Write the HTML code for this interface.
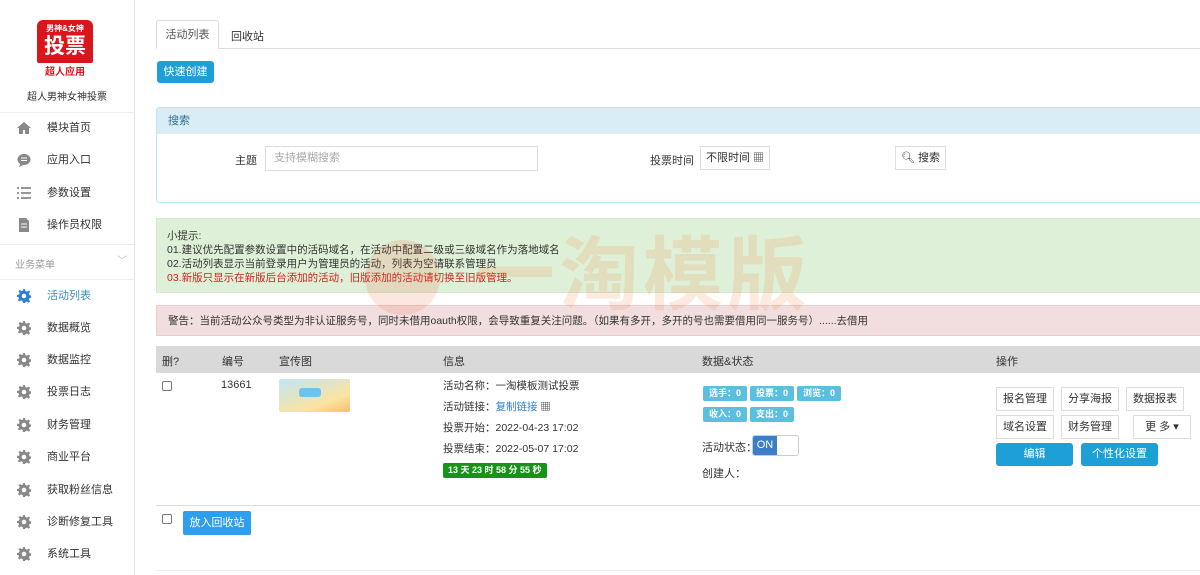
<!DOCTYPE html>
<html><head><meta charset="utf-8"><style>
*{margin:0;padding:0;box-sizing:border-box}
body{width:1200px;height:575px;overflow:hidden;background:#fff;font-family:"Liberation Sans","Noto Sans CJK SC",sans-serif;font-size:11px;color:#333;position:relative}
.a{position:absolute}
.side{left:0;top:0;width:135px;height:575px;border-right:1px solid #e5e5e5}
.nav{left:0;width:134px;height:32px;line-height:32px;padding-left:47px;font-size:11px;color:#333}
.ic{position:absolute;left:17px;top:9px;width:14px;height:14px}
.btn{position:absolute;border:1px solid #ddd;background:#fff;text-align:center;color:#333;font-size:11px}
.lbl{display:inline-block;background:#5bc0de;color:#fff;font-weight:bold;font-size:9px;height:15px;line-height:15px;padding:0 6px;margin-right:3px;border-radius:2px}
</style></head><body>
<svg width="0" height="0" style="position:absolute"><defs><symbol id="g" viewBox="0 0 14 14"><path d="M6 0h2l.4 2 1.6.7 1.7-1.2 1.4 1.4-1.2 1.7.7 1.6 2 .4v2l-2 .4-.7 1.6 1.2 1.7-1.4 1.4-1.7-1.2-1.6.7L8 14H6l-.4-2-1.6-.7-1.7 1.2-1.4-1.4 1.2-1.7L1.4 8 0 8V6l2-.4.7-1.6-1.2-1.7 1.4-1.4 1.7 1.2 1.6-.7z"/><circle cx="7" cy="7" r="2.3" fill="#fff"/></symbol></defs></svg>
<div class="a side"></div>
<div class="a" style="left:37px;top:20px;width:56px;height:43px;background:#d9161c;border-radius:6px 6px 2px 2px;color:#fff;text-align:center">
<div style="font-size:8px;line-height:10px;margin-top:4px;font-weight:bold">男神&amp;女神</div>
<div style="font-size:21px;font-weight:bold;line-height:25px">投票</div></div>
<div class="a" style="left:37px;top:63px;width:56px;text-align:center;color:#d9161c;font-weight:bold;font-size:10px">超人应用</div>
<div class="a" style="left:0;top:88px;width:134px;text-align:center;font-size:10px">超人男神女神投票</div>
<div class="a" style="left:0;top:112px;width:134px;border-top:1px solid #eee"></div>
<div class="a nav" style="top:112px"><svg class="ic" viewBox="0 0 14 14"><path d="M7 1L0 7h2v6h4V9h2v4h4V7h2z" fill="#888"/></svg>模块首页</div>
<div class="a nav" style="top:144px"><svg class="ic" viewBox="0 0 14 14"><ellipse cx="7" cy="6.5" rx="6.5" ry="5.5" fill="#888"/><path d="M3 11l-1 3 4-2z" fill="#888"/><path d="M4 5h6M4 7.5h6" stroke="#fff"/></svg>应用入口</div>
<div class="a nav" style="top:177px"><svg class="ic" viewBox="0 0 14 14"><path d="M0 2h2M4 2h10M0 7h2M4 7h10M0 12h2M4 12h10" stroke="#777" stroke-width="1.6"/></svg>参数设置</div>
<div class="a nav" style="top:209px"><svg class="ic" viewBox="0 0 14 14"><path d="M2 0h7l3 3v11H2z" fill="#888"/><path d="M4 6h6M4 9h6" stroke="#fff"/></svg>操作员权限</div>
<div class="a" style="left:0;top:244px;width:134px;border-top:1px solid #eee"></div>
<div class="a" style="left:15px;top:256px;color:#999;font-size:10px">业务菜单</div>
<div class="a" style="left:117px;top:252px;color:#bbb;font-size:10px">﹀</div>
<div class="a" style="left:0;top:279px;width:134px;border-top:1px solid #eee"></div>
<div class="a nav" style="top:280px;color:#3c8dbc"><svg class="ic" style="fill:#2a7fd4"><use href="#g"/></svg>活动列表</div>
<div class="a nav" style="top:312px"><svg class="ic" style="fill:#888"><use href="#g"/></svg>数据概览</div>
<div class="a nav" style="top:344px"><svg class="ic" style="fill:#888"><use href="#g"/></svg>数据监控</div>
<div class="a nav" style="top:376px"><svg class="ic" style="fill:#888"><use href="#g"/></svg>投票日志</div>
<div class="a nav" style="top:409px"><svg class="ic" style="fill:#888"><use href="#g"/></svg>财务管理</div>
<div class="a nav" style="top:441px"><svg class="ic" style="fill:#888"><use href="#g"/></svg>商业平台</div>
<div class="a nav" style="top:474px"><svg class="ic" style="fill:#888"><use href="#g"/></svg>获取粉丝信息</div>
<div class="a nav" style="top:506px"><svg class="ic" style="fill:#888"><use href="#g"/></svg>诊断修复工具</div>
<div class="a nav" style="top:538px"><svg class="ic" style="fill:#888"><use href="#g"/></svg>系统工具</div>

<div class="a" style="left:156px;top:48px;width:1044px;border-top:1px solid #ddd"></div>
<div class="a" style="left:156px;top:20px;width:63px;height:29px;border:1px solid #ddd;border-bottom:none;background:#fff;border-radius:3px 3px 0 0;text-align:center;line-height:28px;color:#555">活动列表</div>
<div class="a" style="left:231px;top:28px;color:#333">回收站</div>
<div class="a" style="left:157px;top:61px;width:57px;height:22px;background:#1e9fd6;color:#fff;border-radius:3px;text-align:center;line-height:22px">快速创建</div>

<div class="a" style="left:156px;top:107px;width:1050px;height:96px;border:1px solid #bce8f1;border-radius:3px"></div>
<div class="a" style="left:157px;top:108px;width:1050px;height:26px;background:#d9edf7;color:#31708f;line-height:26px;padding-left:11px">搜索</div>
<div class="a" style="left:235px;top:152px">主题</div>
<div class="a" style="left:265px;top:146px;width:273px;height:25px;border:1px solid #ddd;color:#aaa;line-height:23px;padding-left:8px">支持模糊搜索</div>
<div class="a" style="left:650px;top:152px">投票时间</div>
<div class="btn" style="left:700px;top:146px;width:70px;height:24px;line-height:22px">不限时间 ▦</div>
<div class="btn" style="left:895px;top:146px;width:51px;height:24px;line-height:22px">🔍︎ 搜索</div>

<div class="a" style="left:156px;top:218px;width:1050px;height:75px;background:#dff0d8;border:1px solid #d6e9c6"></div>
<div class="a" style="left:167px;top:229px;line-height:14px;font-size:10.5px;color:#333">小提示:<br>01.建议优先配置参数设置中的活码域名，在活动中配置二级或三级域名作为落地域名<br>02.活动列表显示当前登录用户为管理员的活动，列表为空请联系管理员<br><span style="color:#d62020">03.新版只显示在新版后台添加的活动，旧版添加的活动请切换至旧版管理。</span></div>
<div class="a" style="left:156px;top:305px;width:1050px;height:31px;background:#f2dede;border:1px solid #ebccd1;line-height:30px;padding-left:11px;font-size:10.5px">警告：当前活动公众号类型为非认证服务号，同时未借用oauth权限，会导致重复关注问题。（如果有多开，多开的号也需要借用同一服务号）......去借用</div>
<div class="a" style="left:365px;top:240px;width:75px;height:75px;border-radius:50%;background:rgba(235,90,50,.15)"></div>
<div class="a" style="left:475px;top:228px;font-size:80px;font-weight:bold;color:rgba(240,130,60,.17);line-height:95px;letter-spacing:4px">一淘模版</div>

<div class="a" style="left:156px;top:346px;width:1050px;height:27px;background:#d9d9d9"></div>
<div class="a" style="left:162px;top:353px">删?</div>
<div class="a" style="left:222px;top:353px">编号</div>
<div class="a" style="left:279px;top:353px">宣传图</div>
<div class="a" style="left:443px;top:353px">信息</div>
<div class="a" style="left:702px;top:353px">数据&amp;状态</div>
<div class="a" style="left:996px;top:353px">操作</div>
<div class="a" style="left:162px;top:381px;width:10px;height:10px;border:1px solid #777;border-radius:2px"></div>
<div class="a" style="left:221px;top:379px;font-size:11px">13661</div>
<div class="a" style="left:279px;top:379px;width:71px;height:33px;background:linear-gradient(160deg,#bfe6f7,#fde3a0 70%,#f3c06a);border-radius:2px"><div style="position:absolute;left:20px;top:9px;width:22px;height:9px;background:#6cc3ec;border-radius:3px"></div></div>
<div class="a" style="left:443px;top:376px;line-height:21px;font-size:10.5px">活动名称：一淘模板测试投票<br>活动链接：<span style="color:#2a7fd4">复制链接</span> ▦<br>投票开始：2022-04-23 17:02<br>投票结束：2022-05-07 17:02</div>
<div class="a" style="left:443px;top:463px;height:15px;line-height:15px;background:#159515;color:#fff;font-weight:bold;font-size:9px;padding:0 5px;border-radius:2px">13 天 23 时 58 分 55 秒</div>
<div class="a" style="left:703px;top:386px"><span class="lbl">选手：0</span><span class="lbl">投票：0</span><span class="lbl">浏览：0</span></div>
<div class="a" style="left:703px;top:407px"><span class="lbl">收入：0</span><span class="lbl">支出：0</span></div>
<div class="a" style="left:702px;top:439px">活动状态：</div>
<div class="a" style="left:752px;top:435px;width:47px;height:21px;border:1px solid #ccc;border-radius:3px;overflow:hidden"><div style="width:24px;height:100%;background:#3c7fc8;color:#fff;line-height:19px;text-align:center;font-size:11px">ON</div></div>
<div class="a" style="left:702px;top:465px">创建人：</div>
<div class="btn" style="left:996px;top:387px;width:58px;height:24px;line-height:22px">报名管理</div>
<div class="btn" style="left:1061px;top:387px;width:58px;height:24px;line-height:22px">分享海报</div>
<div class="btn" style="left:1126px;top:387px;width:58px;height:24px;line-height:22px">数据报表</div>
<div class="btn" style="left:996px;top:415px;width:58px;height:24px;line-height:22px">域名设置</div>
<div class="btn" style="left:1061px;top:415px;width:58px;height:24px;line-height:22px">财务管理</div>
<div class="btn" style="left:1133px;top:415px;width:58px;height:24px;line-height:22px">更 多 ▾</div>
<div class="a" style="left:996px;top:443px;width:77px;height:23px;background:#1e9fd6;color:#fff;border-radius:3px;text-align:center;line-height:23px">编辑</div>
<div class="a" style="left:1081px;top:443px;width:77px;height:23px;background:#1e9fd6;color:#fff;border-radius:3px;text-align:center;line-height:23px">个性化设置</div>
<div class="a" style="left:156px;top:505px;width:1050px;border-top:1px solid #ddd"></div>
<div class="a" style="left:162px;top:514px;width:10px;height:10px;border:1px solid #777;border-radius:2px"></div>
<div class="a" style="left:183px;top:511px;width:68px;height:24px;background:#2d9ef0;color:#fff;border-radius:2px;text-align:center;line-height:24px">放入回收站</div>
<div class="a" style="left:156px;top:570px;width:1050px;border-top:1px solid #eee"></div>
</body></html>
